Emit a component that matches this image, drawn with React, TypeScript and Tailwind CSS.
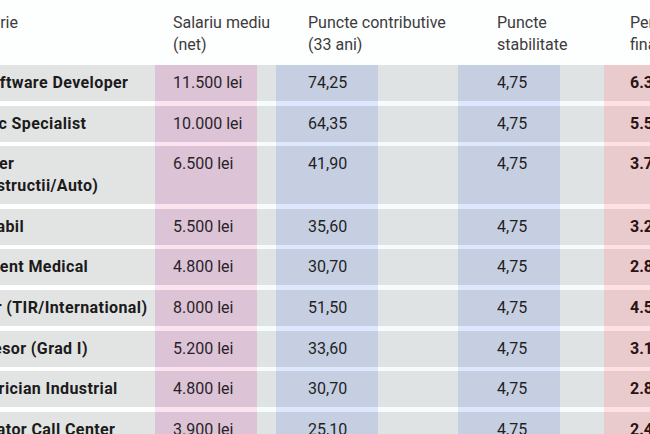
import React from 'react';

type Row = { job: string; salary: string; contrib: string; stab: string; pension: string };

const rows: Row[] = [
  { job: 'IT Software Developer', salary: '11.500 lei', contrib: '74,25', stab: '4,75', pension: '6.399 lei' },
  { job: 'Medic Specialist', salary: '10.000 lei', contrib: '64,35', stab: '4,75', pension: '5.597 lei' },
  { job: 'Inginer (Constructii/Auto)', salary: '6.500 lei', contrib: '41,90', stab: '4,75', pension: '3.779 lei' },
  { job: 'Contabil', salary: '5.500 lei', contrib: '35,60', stab: '4,75', pension: '3.268 lei' },
  { job: 'Asistent Medical', salary: '4.800 lei', contrib: '30,70', stab: '4,75', pension: '2.871 lei' },
  { job: 'Sofer (TIR/International)', salary: '8.000 lei', contrib: '51,50', stab: '4,75', pension: '4.556 lei' },
  { job: 'Profesor (Grad I)', salary: '5.200 lei', contrib: '33,60', stab: '4,75', pension: '3.106 lei' },
  { job: 'Electrician Industrial', salary: '4.800 lei', contrib: '30,70', stab: '4,75', pension: '2.871 lei' },
  { job: 'Operator Call Center', salary: '3.900 lei', contrib: '25,10', stab: '4,75', pension: '2.418 lei' },
];

const grid = 'grid grid-cols-[206px_102px_19px_102px_80px_102px_44px_1fr]';

const Gap = () => (
  <div className={`${grid} h-[4.6px]`}>
    <div className="bg-white" />
    <div className="bg-[#fde3f0]" />
    <div className="bg-[#f6fbfb]" />
    <div className="bg-[#dfe7ff]" />
    <div className="bg-[#f6fbfb]" />
    <div className="bg-[#dfe7ff]" />
    <div className="bg-[#f6fbfb]" />
    <div className="bg-[#ffe1e5]" />
  </div>
);

const TableRow = ({ row }: { row: Row }) => (
  <div className={`${grid} text-[16px] leading-[22px] text-[#1f1f1f]`}>
    <div className="bg-[#e2e4e3] pl-3 pr-2 py-[7px] font-bold tracking-[0.4px] whitespace-nowrap text-[#1b1b1b]">
      {row.job === 'Inginer (Constructii/Auto)' ? (
        <>
          Inginer
          <br />
          (Constructii/Auto)
        </>
      ) : (
        row.job
      )}
    </div>
    <div className="bg-[#dcc4d6] pl-[18px] py-[7px] whitespace-nowrap text-[#2a1f28]">{row.salary}</div>
    <div className="bg-[#e0e3e3]" />
    <div className="bg-[#c6cfe2] pl-[32px] py-[7px] whitespace-nowrap">{row.contrib}</div>
    <div className="bg-[#e0e3e3]" />
    <div className="bg-[#c6cfe2] pl-[39px] py-[7px] whitespace-nowrap">{row.stab}</div>
    <div className="bg-[#e0e3e3]" />
    <div className="bg-[#e9cacd] pl-[26px] py-[7px] whitespace-nowrap font-bold text-[#2b1214]">{row.pension}</div>
  </div>
);

export default function App() {
  return (
    <div className="w-[650px] h-[434px] overflow-hidden bg-[#fdfefe]" style={{ fontFamily: 'Roboto, "Liberation Sans", sans-serif' }}>
      <div className="-ml-[51px] w-[760px]">
        <div className={`${grid} h-[65px] pt-[12px] text-[16px] leading-[22px] text-[#3c3c3c]`}>
          <div className="pl-3">Meserie</div>
          <div className="pl-[18px] whitespace-nowrap">
            Salariu mediu
            <br />
            (net)
          </div>
          <div />
          <div className="pl-[32px] whitespace-nowrap">
            Puncte contributive
            <br />
            (33 ani)
          </div>
          <div />
          <div className="pl-[39px] whitespace-nowrap">
            Puncte
            <br />
            stabilitate
          </div>
          <div />
          <div className="pl-[26px] whitespace-nowrap">
            Pensie
            <br />
            finală
          </div>
        </div>
        {rows.map((row, i) => (
          <React.Fragment key={row.job}>
            {i > 0 && <Gap />}
            <TableRow row={row} />
          </React.Fragment>
        ))}
      </div>
    </div>
  );
}
